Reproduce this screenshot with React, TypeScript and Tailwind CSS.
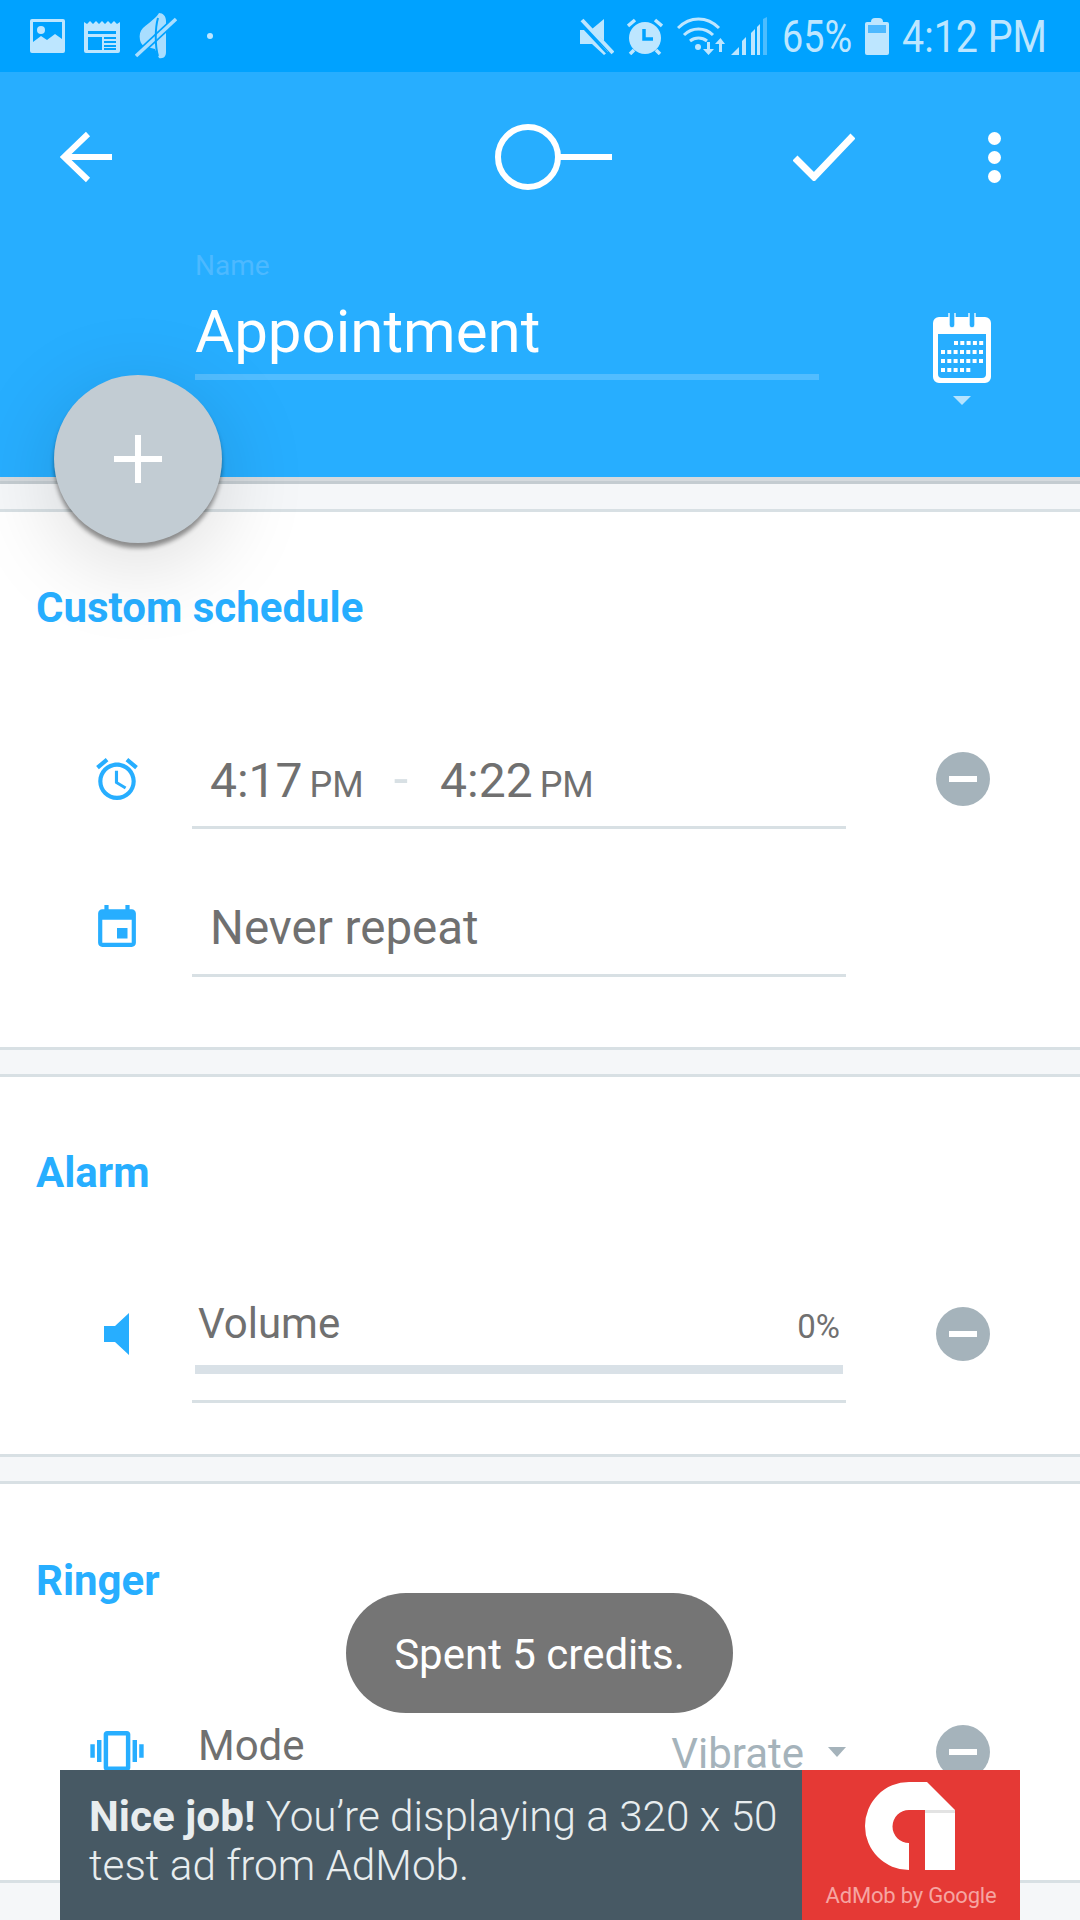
const blue = "text-[#27aeff]";

function ImageIcon() {
  return (
    <svg width="35" height="34" viewBox="0 0 35 34" className="text-[#bde6ff]">
      <path fill="currentColor" fillRule="evenodd" d="M2 0h31a2 2 0 0 1 2 2v30a2 2 0 0 1-2 2H2a2 2 0 0 1-2-2V2a2 2 0 0 1 2-2zM3 3v20l8-6 6 4 8-6 7 5V3z" />
      <circle cx="11" cy="11" r="4" fill="currentColor" />
    </svg>
  );
}

function NewsIcon() {
  return (
    <svg width="36" height="33" viewBox="0 0 36 33" className="text-[#bde6ff]">
      <path fill="currentColor" fillRule="evenodd" d="M0 2l3 2 3-3 3 3 3-3 3 3 3-3 3 3 3-3 3 3 3-3 3 3 3-2v29a2 2 0 0 1-2 2H2a2 2 0 0 1-2-2zM4 11v3h28v-3zM4 17v13h14V17zM20 17v2h12v-2zM20 21v2h12v-2zM20 25v2h12v-2zM20 28v2h12v-2z" />
    </svg>
  );
}

function MutedRing() {
  return (
    <svg width="42" height="46" viewBox="0 0 42 46" className="text-[#a9deff]">
      <path fill="currentColor" d="M24 0c-2 4-9 9-16 15-3 3-4 7-3 12 1 4 3 6 7 7l8 2 4 9c5 1 7-2 7-6V8c0-5-3-8-7-8z" />
      <path stroke="#00a2ff" strokeWidth="7" d="M1 43L41 6" />
      <path stroke="currentColor" strokeWidth="3.5" d="M1 43L41 6" />
      <path stroke="#00a2ff" strokeWidth="2" fill="none" d="M23 5c-3 10-3 28 0 38" />
    </svg>
  );
}

function SpeakerOff() {
  return (
    <svg width="34" height="37" viewBox="0 0 34 37" className="text-[#bde6ff]">
      <path fill="currentColor" d="M0 12h6l22 22-4 3-12-11H0zM12 11L24 1v22z" />
      <path stroke="currentColor" strokeWidth="4" d="M2 2l31 33" />
      <path stroke="#00a2ff" strokeWidth="2.500" d="M0 6l28 30" />
    </svg>
  );
}

function AlarmFilled() {
  return (
    <svg width="36" height="37" viewBox="0 0 36 37" className="text-[#bde6ff]">
      <path stroke="currentColor" strokeWidth="3.500" d="M1 8l7-6M35 8l-7-6M3 36l4-4M33 36l-4-4" />
      <circle cx="18" cy="20" r="16" fill="currentColor" />
      <path stroke="#00a2ff" strokeWidth="3.500" fill="none" d="M17 11v10h9" />
    </svg>
  );
}

function WifiData() {
  return (
    <svg width="48" height="38" viewBox="0 0 48 38" className="text-[#bde6ff]">
      <g fill="none" stroke="currentColor" strokeWidth="3">
        <path d="M1 11c12-12 29-12 41 0" />
        <path d="M7 18c8-8 21-8 29 0" />
        <path d="M13 24c5-4 12-4 17 0" />
      </g>
      <circle cx="21" cy="30" r="3" fill="currentColor" />
      <path fill="currentColor" d="M30 25h3v7h4l-5.500 6-5.500-6h4zM42 35h3v-8h3l-4.500-6-5.500 6h4z" />
    </svg>
  );
}

function Signal() {
  return (
    <svg width="36" height="38" viewBox="0 0 36 38" className="text-[#bde6ff]">
      <path fill="currentColor" d="M0 38L8 30v8zM11 38V24l4-4v18zM20 38V16l4-4v26z" />
      <path fill="currentColor" opacity=".4" d="M32 38V2l4-2v38z" />
      <path fill="currentColor" d="M26 38V10l3-3v31z" />
    </svg>
  );
}

function Battery() {
  return (
    <div className="w-[24px] h-[37px] flex flex-col items-center">
      <div className="w-[12px] h-[4px] bg-[#bde6ff] rounded-t-sm" />
      <div className="w-[24px] h-[33px] bg-[#bde6ff] rounded-[2px] p-[3px]">
        <div className="h-[8px] bg-[#4db9ff]" />
      </div>
    </div>
  );
}

function StatusBar() {
  return (
    <div className="h-[72px] bg-[#00a2ff] flex items-center pl-[30px] pr-[35px] text-[#bde6ff]">
      <ImageIcon />
      <div className="ml-[19px]">
        <NewsIcon />
      </div>
      <div className="ml-[15px]">
        <MutedRing />
      </div>
      <div className="ml-[30px] w-[6px] h-[6px] rounded-full bg-[#bde6ff]" />
      <div className="ml-auto flex items-center">
        <SpeakerOff />
        <div className="ml-[13px]">
          <AlarmFilled />
        </div>
        <div className="ml-[14px]">
          <WifiData />
        </div>
        <div className="ml-[6px]">
          <Signal />
        </div>
        <span className="ml-[15px] w-[70px] text-[45px] leading-none origin-left scale-x-[.84] whitespace-nowrap">65%</span>
        <div className="ml-[13px]">
          <Battery />
        </div>
        <span className="ml-[13px] w-[143px] text-[45px] leading-none origin-left scale-x-[.875] whitespace-nowrap">4:12 PM</span>
      </div>
    </div>
  );
}

function Header() {
  return (
    <div className="h-[405px] bg-[#27aeff]">
      <div className="h-[170px] relative flex items-start pt-[59px] pl-[60px]">
        <svg width="52" height="52" viewBox="0 0 52 52" className="shrink-0">
          <path fill="none" stroke="#fff" strokeWidth="6" d="M52 26H5M28 3L4 26l24 23" />
        </svg>
        <svg width="120" height="68" viewBox="0 0 120 68" className="ml-[383px] -mt-[8px] shrink-0">
          <circle cx="33" cy="34" r="30" fill="none" stroke="#fff" strokeWidth="6" />
          <path stroke="#fff" strokeWidth="6" d="M63 34h54" />
        </svg>
        <svg width="62" height="48" viewBox="0 0 62 48" className="ml-[178px] mt-[2px] shrink-0">
          <path fill="none" stroke="#fff" strokeWidth="7" d="M2 25l19 19L60 3" />
        </svg>
        <div className="ml-[133px] mt-[1px] flex flex-col gap-[6px]">
          <div className="w-[13px] h-[13px] rounded-full bg-white" />
          <div className="w-[13px] h-[13px] rounded-full bg-white" />
          <div className="w-[13px] h-[13px] rounded-full bg-white" />
        </div>
      </div>
      <div className="flex">
        <div className="ml-[195px] w-[624px] pt-[7px]">
          <div className="text-[28px] leading-[34px] text-[#4db9ff]">Name</div>
          <div className="text-[60px] leading-[72px] text-white mt-[13px] border-b-[6px] border-[#52bdff] h-[84px] whitespace-nowrap">Appointment</div>
        </div>
        <div className="ml-[114px] mt-[71px] flex flex-col items-center">
          <svg width="58" height="70" viewBox="0 0 58 70">
            <path fill="#fff" fillRule="evenodd" d="M6 4h10v8a3 3 0 0 0 6 0V4h14v8a3 3 0 0 0 6 0V4h10a6 6 0 0 1 6 6v54a6 6 0 0 1-6 6H6a6 6 0 0 1-6-6V10a6 6 0 0 1 6-6zM5 21v40a4 4 0 0 0 4 4h40a4 4 0 0 0 4-4V21z" />
            <path fill="none" stroke="#fff" strokeWidth="1.500" d="M16 0v12a3 3 0 0 0 6 0V0M36 0v12a3 3 0 0 0 6 0V0" opacity="0.9" />
            <g fill="#fff">
              {[21, 27.300, 33.600, 39.900, 46.200].map((x) => (
                <rect key={x} x={x} y="28" width="4" height="4" />
              ))}
              {[8, 14.300, 20.600, 27, 33.300, 39.600, 46].map((x) => (
                <rect key={x} x={x} y="37" width="4" height="4" />
              ))}
              {[8, 14.300, 20.600, 27, 33.300, 39.600, 46].map((x) => (
                <rect key={x} x={x} y="46" width="4" height="4" />
              ))}
              {[8, 14.300, 20.600, 27, 33.300].map((x) => (
                <rect key={x} x={x} y="55" width="4" height="4" />
              ))}
            </g>
          </svg>
          <div className="mt-[13px] w-0 h-0 border-x-[9px] border-x-transparent border-t-[9px] border-t-[#b5e3ff]" />
        </div>
      </div>
    </div>
  );
}

function Divider() {
  return <div className="h-[30px] border-y-[3px] border-[#d8e0e4] bg-[#f5f7f9]" />;
}

function Title({ children }: { children: string }) {
  return <div className={`pl-[36px] pt-[74px] text-[42px] leading-[44px] font-bold ${blue}`}>{children}</div>;
}

function Remove() {
  return (
    <div className="w-[54px] h-[54px] rounded-full bg-[#a5b3bb] flex items-center justify-center shrink-0">
      <div className="w-[28px] h-[6px] bg-white" />
    </div>
  );
}

function AlarmIcon() {
  return (
    <svg width="42" height="42" viewBox="2 1.860 20 20.140" className={blue}>
      <path fill="currentColor" d="M22 5.720l-4.600-3.860-1.290 1.530 4.600 3.860L22 5.720zM7.880 3.390L6.600 1.860 2 5.710l1.290 1.530 4.590-3.850zM12.500 8H11v6l4.750 2.850.75-1.230-4-2.370V8zM12 4c-4.970 0-9 4.030-9 9s4.030 9 9 9 9-4.030 9-9-4.030-9-9-9zm0 16c-3.870 0-7-3.130-7-7s3.130-7 7-7 7 3.130 7 7-3.130 7-7 7z" />
    </svg>
  );
}

function EventIcon() {
  return (
    <svg width="38" height="42" viewBox="3 1 18 20" className={blue}>
      <path fill="currentColor" d="M17 12h-5v5h5v-5zM16 1v2H8V1H6v2H5c-1.110 0-1.990.9-1.990 2L3 19c0 1.100.89 2 2 2h14c1.100 0 2-.9 2-2V5c0-1.100-.9-2-2-2h-1V1h-2zm3 18H5V8h14v11z" />
    </svg>
  );
}

function VibrationIcon() {
  return (
    <svg width="54" height="40" viewBox="0 3 24 18" className={blue}>
      <path fill="currentColor" d="M0 15h2V9H0v6zm3 2h2V7H3v10zm19-8v6h2V9h-2zm-3 8h2V7h-2v10zM16.500 3h-9C6.670 3 6 3.670 6 4.500v15c0 .83.67 1.500 1.500 1.500h9c.83 0 1.500-.67 1.500-1.500v-15c0-.83-.67-1.500-1.500-1.500zM16 19H8V5h8v14z" />
    </svg>
  );
}

function Section1() {
  return (
    <div className="h-[535px]">
      <Title>Custom schedule</Title>
      <div className="mt-[90px] h-[109px] flex text-[#707070]">
        <div className="w-[192px] flex justify-center pl-[42px] pt-[38px] box-border">
          <AlarmIcon />
        </div>
        <div className="w-[654px] border-b-[3px] border-[#d8e0e4] pl-[18px] pt-[30px] flex items-baseline leading-[60px] text-[48px]">
          <span>4:17</span>
          <span className="ml-[7px] text-[36px]">PM</span>
          <span className="ml-[30px] text-[52px] text-[#d8e0e4]">-</span>
          <span className="ml-[32px]">4:22</span>
          <span className="ml-[7px] text-[36px]">PM</span>
        </div>
        <div className="ml-[90px] pt-[32px]">
          <Remove />
        </div>
      </div>
      <div className="h-[148px] flex text-[#707070]">
        <div className="w-[192px] flex justify-center pl-[42px] pt-[76px] box-border">
          <EventIcon />
        </div>
        <div className="w-[654px] border-b-[3px] border-[#d8e0e4] pl-[18px] pt-[69px] leading-[60px] text-[47.500px]">Never repeat</div>
      </div>
    </div>
  );
}

function Section2() {
  return (
    <div className="h-[377px]">
      <Title>Alarm</Title>
      <div className="h-[208px] flex text-[#707070]">
        <div className="w-[192px] flex justify-center pl-[42px] pt-[118px] box-border">
          <svg width="26" height="42" viewBox="0 0 26 42" className={blue}>
            <path fill="currentColor" d="M0 13h11L25 0v42L11 29H0z" />
          </svg>
        </div>
        <div className="w-[654px] h-[208px] border-b-[3px] border-[#d8e0e4] flex flex-col">
          <div className="flex items-baseline pl-[6px] pr-[6px] mt-[104px] h-[50px]">
            <span className="text-[42px] leading-[50px]">Volume</span>
            <span className="ml-auto text-[33px] leading-[50px]">0%</span>
          </div>
          <div className="mx-[3px] mt-[16px] h-[9px] bg-[#d9e1e7]" />
        </div>
        <div className="ml-[90px] pt-[112px]">
          <Remove />
        </div>
      </div>
    </div>
  );
}

function Section3() {
  return (
    <div className="h-[396px]">
      <div className="pt-[1px]">
        <Title>Ringer</Title>
      </div>
      <div className="flex text-[#707070]">
        <div className="w-[192px] flex justify-center pl-[42px] pt-[128px] box-border">
          <VibrationIcon />
        </div>
        <div className="w-[654px] flex items-start pl-[6px] relative pt-[118px]">
          <span className="text-[42px] leading-[50px]">Mode</span>
          <span className="ml-auto text-[42px] leading-[50px] text-[#a5b3bb] mt-[8px]">Vibrate</span>
          <div className="ml-[24px] mt-[26px] w-0 h-0 border-x-[9px] border-x-transparent border-t-[10px] border-t-[#a5b3bb]" />
        </div>
        <div className="ml-[90px] pt-[122px]">
          <Remove />
        </div>
      </div>
    </div>
  );
}

function Ad() {
  return (
    <div className="absolute left-[60px] top-[1770px] w-[960px] h-[150px] flex bg-[#475964]">
      <div className="w-[742px] pl-[29px] pt-[22px] text-[42.250px] leading-[49px] font-light text-[#e8edef] whitespace-nowrap">
        <div>
          <span className="font-bold">Nice job!</span> You’re displaying a 320 x 50
        </div>
        <div>test ad from AdMob.</div>
      </div>
      <div className="flex-1 bg-[#e53935] flex flex-col items-center pt-[12px]">
        <svg width="90" height="88" viewBox="0 0 90 88" className="shrink-0 -ml-[3px]">
          <path fill="#fff" d="M44 0h18l28 28v60H60V28H44a16.500 16.500 0 0 0 0 33v27A44 44 0 0 1 44 0z" />
          <path fill="#e3e3e3" d="M60 28h30v3H60z" />
        </svg>
        <span className="mt-[12px] text-[22px] leading-[28px] -tracking-[0.2px] text-[#f6a5a2] whitespace-nowrap">AdMob by Google</span>
      </div>
    </div>
  );
}

export default function App() {
  return (
    <div className="relative w-[1080px] h-[1920px] overflow-hidden bg-white font-[Roboto,sans-serif]">
      <StatusBar />
      <Header />
      <div className="h-[35px] pt-[4px] bg-[#d5dade]">
        <div className="h-[31px] border-t-[3px] border-b-[3px] border-t-[#c4ccd1] border-b-[#d8e0e4] bg-[#f5f7f9]" />
      </div>
      <Section1 />
      <Divider />
      <Section2 />
      <Divider />
      <Section3 />
      <div className="h-[40px] border-t-[3px] border-[#d8e0e4] bg-[#f5f7f9]" />

      {/* add button sits over the header edge */}
      <div className="absolute left-[54px] top-[375px] w-[168px] h-[168px] rounded-full bg-[#c2ccd3] shadow-[0_5px_4px_rgba(0,0,0,0.4),0_20px_90px_rgba(0,0,0,0.15)] flex items-center justify-center">
        <svg width="48" height="48" viewBox="0 0 48 48">
          <path stroke="#fff" strokeWidth="6" d="M24 0v48M0 24h48" />
        </svg>
      </div>

      <div className="absolute left-[346px] top-[1593px] w-[387px] h-[120px] rounded-[60px] bg-[#757575] flex items-center justify-center pt-[3px] text-[42px] text-white whitespace-nowrap">
        Spent 5 credits.
      </div>

      <Ad />
    </div>
  );
}
